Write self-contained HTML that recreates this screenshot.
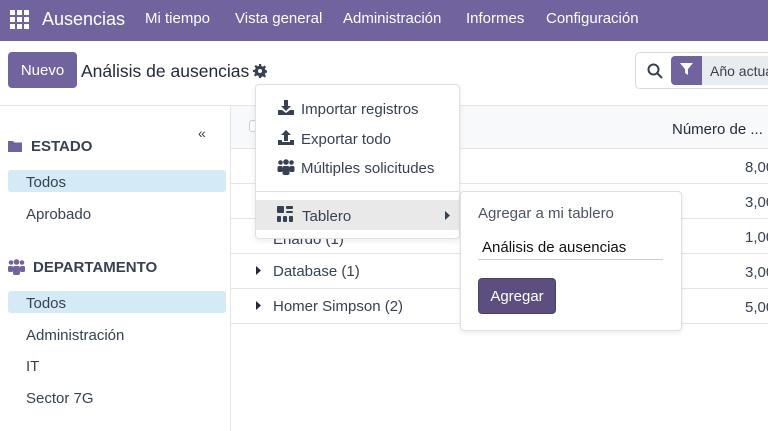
<!DOCTYPE html><html><head><meta charset="utf-8"><style>
*{box-sizing:border-box;margin:0;padding:0}
body{width:768px;height:431px;overflow:hidden;font-family:"Liberation Sans",sans-serif;color:#374151;background:#fff;position:relative;font-size:14px}
.a{position:absolute;white-space:nowrap}
.nav{left:0;top:0;width:768px;height:41px;background:#71639e;color:#fff}
.row{left:231px;width:537px;height:35px;border-bottom:1px solid #e3e5e8}
</style></head><body>
<div class="a nav">
<svg class="a" style="left:10px;top:10px" width="19" height="19" viewBox="0 0 19 19" fill="#fff"><rect x="0" y="0" width="5" height="5"/><rect x="7" y="0" width="5" height="5"/><rect x="14" y="0" width="5" height="5"/><rect x="0" y="7" width="5" height="5"/><rect x="7" y="7" width="5" height="5"/><rect x="14" y="7" width="5" height="5"/><rect x="0" y="14" width="5" height="5"/><rect x="7" y="14" width="5" height="5"/><rect x="14" y="14" width="5" height="5"/></svg>
<div class="a" style="left:42px;top:9px;font-size:18px">Ausencias</div>
<div class="a" style="left:145px;top:10px;font-size:15px">Mi tiempo</div>
<div class="a" style="left:235px;top:10px;font-size:15px">Vista general</div>
<div class="a" style="left:343px;top:10px;font-size:15px">Administración</div>
<div class="a" style="left:466px;top:10px;font-size:15px">Informes</div>
<div class="a" style="left:546px;top:10px;font-size:15px">Configuración</div>
</div>
<div class="a" style="left:8px;top:52px;width:69px;height:36px;background:#71639e;border-radius:4px;color:#fff;font-size:15px;line-height:38px;text-align:center">Nuevo</div>
<div class="a" style="left:81px;top:61px;font-size:17.5px;color:#1f2937">Análisis de ausencias</div>
<svg class="a" style="left:253px;top:64px" width="14" height="14" viewBox="0 0 14 14" fill="#374151"><path d="M6 0h2l.4 2 1.5.7 1.7-1.2 1.4 1.4-1.2 1.7.7 1.5 2 .4v2l-2 .4-.7 1.5 1.2 1.7-1.4 1.4-1.7-1.2-1.5.7L8 14H6l-.4-2-1.5-.7-1.7 1.2-1.4-1.4 1.2-1.7L1.5 8 0 8V6l2-.4.7-1.5-1.2-1.7 1.4-1.4 1.7 1.2L6 2z"/><circle cx="7" cy="7" r="2" fill="#fff"/></svg>
<div class="a" style="left:635px;top:52px;width:150px;height:37px;border:1px solid #d8dadd;border-radius:5px"></div>
<svg class="a" style="left:647px;top:63px" width="16" height="16" viewBox="0 0 16 16" fill="none" stroke="#374151" stroke-width="2"><circle cx="6.5" cy="6.5" r="5"/><path d="M10 10l5 5"/></svg>
<div class="a" style="left:671px;top:56px;width:31px;height:29px;background:#71639e;border-radius:4px 0 0 4px"></div>
<svg class="a" style="left:680px;top:63px" width="13" height="13" viewBox="0 0 13 13" fill="#fff"><path d="M0 0h13L8 6v6L5 10V6z"/></svg>
<div class="a" style="left:702px;top:56px;width:70px;height:29px;background:#e9ecef"></div>
<div class="a" style="left:710px;top:63px;font-size:14px;color:#374151">Año actual</div>
<div class="a" style="left:0;top:105px;width:768px;height:1px;background:#e3e5e8"></div>
<div class="a" style="left:230px;top:106px;width:1px;height:325px;background:#e3e5e8"></div>
<div class="a" style="left:198px;top:125px;font-size:14px">«</div>
<svg class="a" style="left:8px;top:140px" width="14" height="12" viewBox="0 0 14 12" fill="#71639e"><path d="M0 1h5l1.5 1.5H14V12H0z"/></svg>
<div class="a" style="left:31px;top:138px;font-size:15px;font-weight:bold;color:#374151">ESTADO</div>
<div class="a" style="left:8px;top:170px;width:218px;height:22px;background:#d4eaf7;border-radius:3px"></div>
<div class="a" style="left:26px;top:174px;font-size:15px">Todos</div>
<div class="a" style="left:26px;top:206px;font-size:15px">Aprobado</div>
<svg class="a" style="left:8px;top:259px" width="17" height="16" viewBox="0 0 17 16" fill="#71639e"><circle cx="3" cy="3.5" r="2.3"/><circle cx="8.5" cy="3" r="2.8"/><circle cx="14" cy="3.5" r="2.3"/><rect x="0" y="7" width="5" height="6" rx="1.5"/><rect x="12" y="7" width="5" height="6" rx="1.5"/><rect x="5" y="7" width="7" height="9" rx="2"/></svg>
<div class="a" style="left:33px;top:259px;font-size:15px;font-weight:bold">DEPARTAMENTO</div>
<div class="a" style="left:8px;top:291px;width:218px;height:22px;background:#d4eaf7;border-radius:3px"></div>
<div class="a" style="left:26px;top:295px;font-size:15px">Todos</div>
<div class="a" style="left:26px;top:327px;font-size:15px">Administración</div>
<div class="a" style="left:26px;top:358px;font-size:15px">IT</div>
<div class="a" style="left:26px;top:390px;font-size:15px">Sector 7G</div>
<div class="a" style="left:231px;top:106px;width:537px;height:43px;background:#f8f9fa;border-bottom:1px solid #e3e5e8"></div>
<div class="a" style="left:249px;top:120px;width:12px;height:12px;border:1px solid #ccc;border-radius:3px;background:#fff"></div>
<div class="a" style="left:672px;top:121px;font-size:15px;color:#1f2937">Número de ...</div>
<div class="a row" style="top:149px"></div><div class="a" style="left:745px;top:159px;font-size:15px">8,00</div>
<div class="a row" style="top:184px"></div><div class="a" style="left:745px;top:194px;font-size:15px">3,00</div>
<div class="a row" style="top:219px"></div><div class="a" style="left:745px;top:229px;font-size:15px">1,00</div>
<div class="a" style="left:273px;top:231px;font-size:15px">Ehardo (1)</div>
<div class="a row" style="top:254px"></div><div class="a" style="left:745px;top:264px;font-size:15px">3,00</div>
<svg class="a" style="left:256px;top:266px" width="5" height="9" viewBox="0 0 5 9" fill="#1f2937"><path d="M0 0l5 4.5L0 9z"/></svg><div class="a" style="left:273px;top:263px;font-size:15px">Database (1)</div>
<div class="a row" style="top:289px"></div><div class="a" style="left:745px;top:299px;font-size:15px">5,00</div>
<svg class="a" style="left:256px;top:301px" width="5" height="9" viewBox="0 0 5 9" fill="#1f2937"><path d="M0 0l5 4.5L0 9z"/></svg><div class="a" style="left:273px;top:298px;font-size:15px">Homer Simpson (2)</div>
<div class="a" style="left:255px;top:84px;width:205px;height:155px;background:#fff;border:1px solid #dee0e3;border-radius:4px;box-shadow:0 2px 6px rgba(0,0,0,.08)"></div>
<svg class="a" style="left:278px;top:100px" width="16" height="15" viewBox="0 0 16 15" fill="#374151"><path d="M6 0h4v6h3l-5 5-5-5h3z"/><path d="M0 10h4l4 3 4-3h4v5H0z"/></svg>
<div class="a" style="left:301px;top:101px;font-size:15px">Importar registros</div>
<svg class="a" style="left:278px;top:130px" width="16" height="15" viewBox="0 0 16 15" fill="#374151"><path d="M8 0l5 5h-3v6H6V5H3z"/><path d="M0 10h4v2h8v-2h4v5H0z"/></svg>
<div class="a" style="left:301px;top:131px;font-size:15px">Exportar todo</div>
<svg class="a" style="left:277px;top:159px" width="18" height="16" viewBox="0 0 17 16" fill="#374151"><circle cx="3" cy="3.5" r="2.3"/><circle cx="8.5" cy="3" r="2.8"/><circle cx="14" cy="3.5" r="2.3"/><rect x="0" y="7" width="5" height="6" rx="1.5"/><rect x="12" y="7" width="5" height="6" rx="1.5"/><rect x="5" y="7" width="7" height="9" rx="2"/></svg>
<div class="a" style="left:301px;top:160px;font-size:15px">Múltiples solicitudes</div>
<div class="a" style="left:256px;top:191px;width:203px;height:1px;background:#dee0e3"></div>
<div class="a" style="left:256px;top:200px;width:203px;height:30px;background:#e9e9ea"></div>
<svg class="a" style="left:277px;top:206px" width="16" height="16" viewBox="0 0 16 16" fill="#374151"><rect x="0" y="0" width="7" height="7" rx="1"/><rect x="9" y="0" width="7" height="3" rx="1"/><rect x="9" y="5" width="7" height="2" rx="1"/><rect x="0" y="10" width="4" height="6" rx="1"/><rect x="6" y="10" width="4" height="6" rx="1"/><rect x="12" y="10" width="4" height="6" rx="1"/></svg>
<div class="a" style="left:302px;top:208px;font-size:15px">Tablero</div>
<svg class="a" style="left:445px;top:211px" width="5" height="9" viewBox="0 0 5 9" fill="#374151"><path d="M0 0l5 4.5L0 9z"/></svg>
<div class="a" style="left:460px;top:191px;width:222px;height:140px;background:#fff;border:1px solid #dee0e3;border-radius:4px;box-shadow:0 2px 6px rgba(0,0,0,.08)"></div>
<div class="a" style="left:478px;top:205px;font-size:15px;color:#4b5563">Agregar a mi tablero</div>
<div class="a" style="left:482px;top:239px;font-size:15px;color:#111">Análisis de ausencias</div>
<div class="a" style="left:478px;top:259px;width:185px;height:1px;background:#c9ccd0"></div>
<div class="a" style="left:478px;top:278px;width:78px;height:36px;background:#5c4f80;border:1px solid #4a3f6a;border-radius:4px;color:#fff;font-size:15px;line-height:36px;text-align:center">Agregar</div>
</body></html>
